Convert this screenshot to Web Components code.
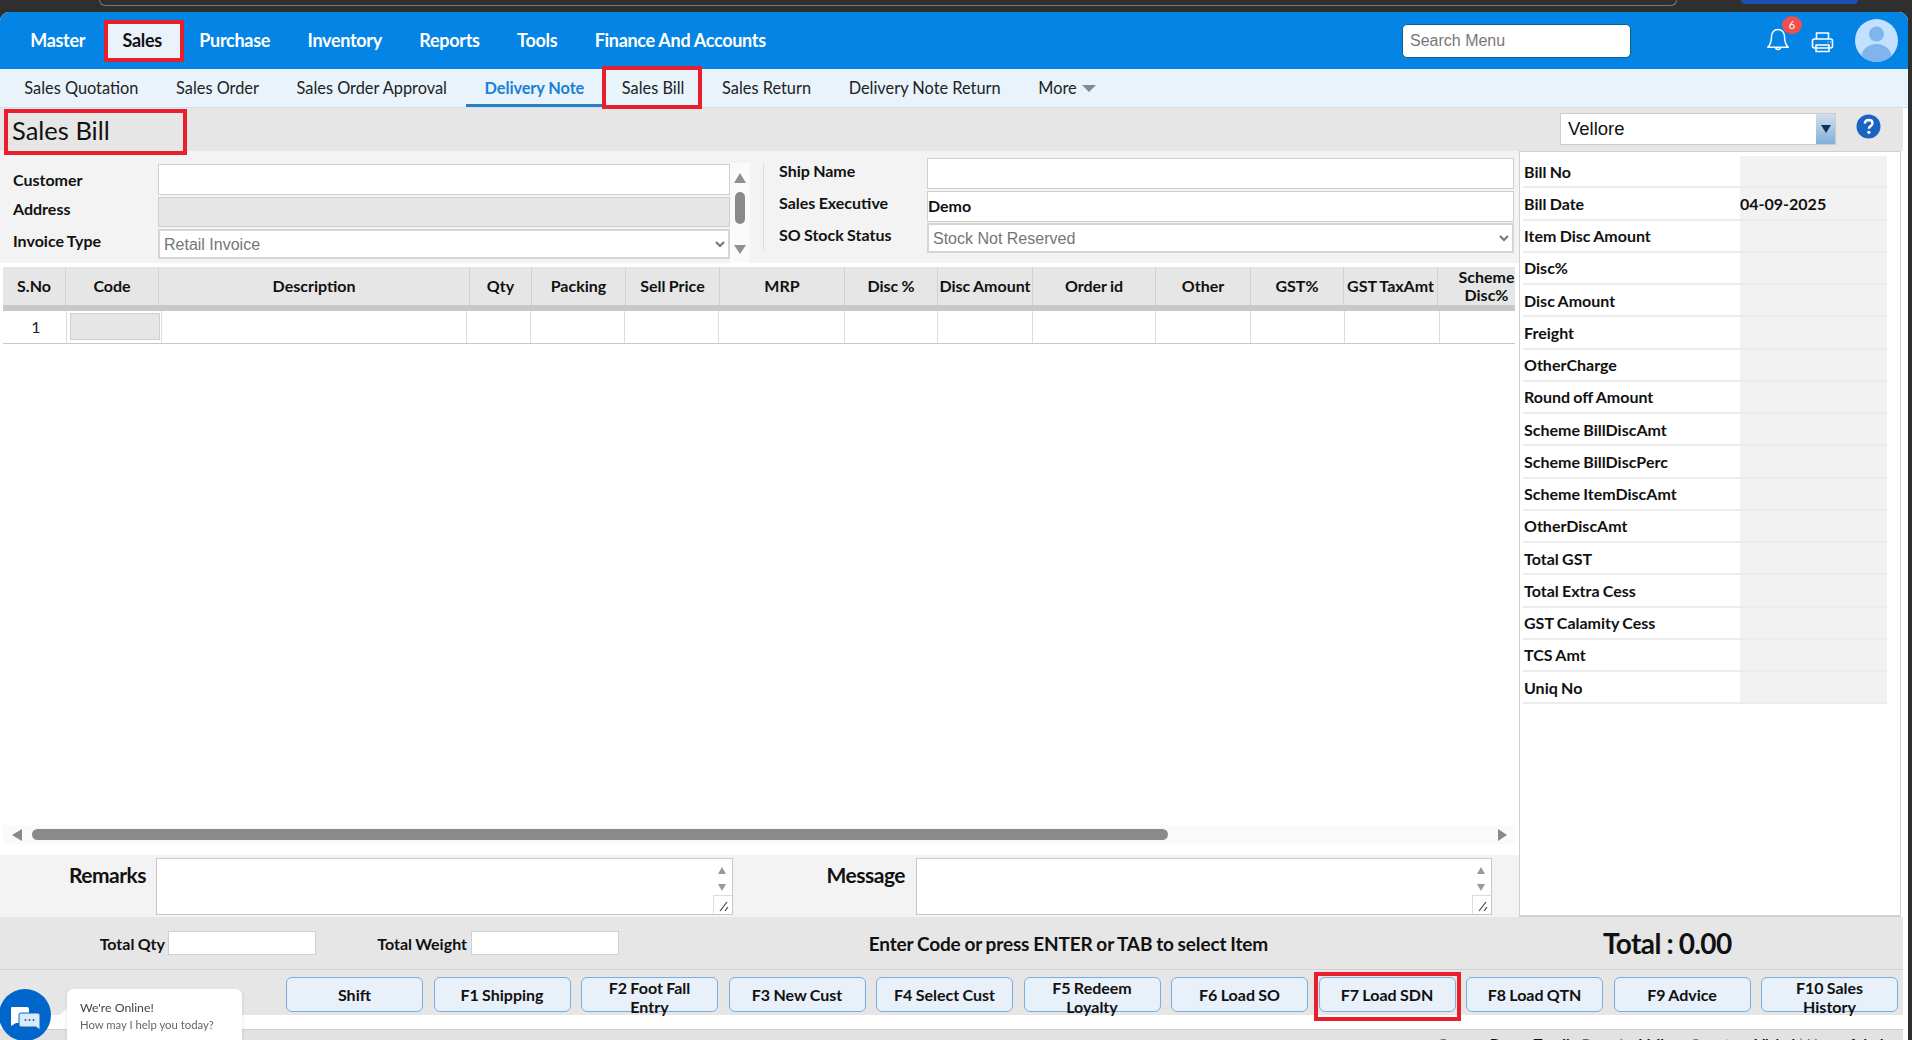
<!doctype html>
<html>
<head>
<meta charset="utf-8">
<title>Sales Bill</title>
<style>
  html, body { margin: 0; height: 1040px; overflow: hidden; background: #2f2f2f; }
  body { font-family: Lato, "Liberation Sans", sans-serif; color: #111; }
</style>
</head>
<body>
<erp-shell>
  <browser-strip slot="strip"></browser-strip>
  <main-nav slot="nav">
    <nav-item>Master</nav-item>
    <nav-item marked>Sales</nav-item>
    <nav-item>Purchase</nav-item>
    <nav-item>Inventory</nav-item>
    <nav-item>Reports</nav-item>
    <nav-item>Tools</nav-item>
    <nav-item>Finance And Accounts</nav-item>
  </main-nav>
  <sub-nav slot="nav">
    <tab-item>Sales Quotation</tab-item>
    <tab-item>Sales Order</tab-item>
    <tab-item>Sales Order Approval</tab-item>
    <tab-item active>Delivery Note</tab-item>
    <tab-item marked>Sales Bill</tab-item>
    <tab-item>Sales Return</tab-item>
    <tab-item>Delivery Note Return</tab-item>
    <tab-item more>More</tab-item>
  </sub-nav>
  <title-bar slot="title">Sales Bill</title-bar>
  <party-form slot="left"></party-form>
  <line-grid slot="left"></line-grid>
  <h-rail slot="left"></h-rail>
  <notes-row slot="left"></notes-row>
  <info-panel slot="right"></info-panel>
  <totals-bar slot="foot"></totals-bar>
  <action-bar slot="foot">
    <fn-button>Shift</fn-button>
    <fn-button>F1 Shipping</fn-button>
    <fn-button two>F2 Foot Fall Entry</fn-button>
    <fn-button>F3 New Cust</fn-button>
    <fn-button>F4 Select Cust</fn-button>
    <fn-button two>F5 Redeem Loyalty</fn-button>
    <fn-button>F6 Load SO</fn-button>
    <fn-button marked>F7 Load SDN</fn-button>
    <fn-button>F8 Load QTN</fn-button>
    <fn-button>F9 Advice</fn-button>
    <fn-button two>F10 Sales History</fn-button>
  </action-bar>
  <status-strip slot="foot"></status-strip>
</erp-shell>
<chat-widget></chat-widget>

<script>
const RED = "#e8202e";
const LABEL = "font-family: Lato, sans-serif; font-weight: 700; word-spacing: -0.6px; color: #111;";

// Shared bits: open shadow root, css() + html() rendered on connect
class Base extends HTMLElement {
  constructor() {
    super();
    this.attachShadow({ mode: "open" });
  }
  connectedCallback() {
    this.shadowRoot.innerHTML = `<style>${this.css()}</style>${this.html()}`;
  }
  css() { return ""; }
  html() { return "<slot></slot>"; }
}

class ErpShell extends Base {
  css() {
    return `
      :host { display: block; width: 1912px; height: 1040px; }
      .page { width: 1908px; height: 1028px; background: #fff; border-radius: 9px 9px 0 0; overflow: hidden; }
      .work { width: 1903px; display: grid; grid-template-columns: 1519px 384px; height: 766px; }
      .left { display: flex; flex-direction: column; min-width: 0; }
      .foot { width: 1903px; }
    `;
  }
  html() {
    return `
      <slot name="strip"></slot>
      <div class="page">
        <slot name="nav"></slot>
        <div class="foot"><slot name="title"></slot></div>
        <div class="work">
          <div class="left"><slot name="left"></slot></div>
          <div><slot name="right"></slot></div>
        </div>
        <div class="foot"><slot name="foot"></slot></div>
      </div>
    `;
  }
}

class BrowserStrip extends Base {
  css() {
    return `
      :host { display: flex; height: 12px; align-items: flex-start; }
      .url { width: 1576px; height: 5px; margin-left: 99px; border: 1px solid #777; border-top: 0; border-radius: 0 0 10px 10px; }
      .pill { width: 117px; height: 4px; margin-left: 64px; background: #1d4fb0; border-radius: 0 0 10px 10px; }
    `;
  }
  html() { return `<div class="url"></div><div class="pill"></div>`; }
}

class MainNav extends Base {
  css() {
    return `
      :host { display: flex; height: 57px; background: #0484e4; align-items: center; padding-left: 11.5px; }
      .search {
        width: 220px; height: 32px; margin-left: auto; background: #fff; border: 1px solid #0f5f7a; border-radius: 5px;
        font: 16px "Liberation Sans", sans-serif; color: #777; display: flex; align-items: center; padding-left: 7px;
      }
      .tools { display: flex; align-items: center; width: 277px; height: 57px; }
      .bell { position: relative; margin-left: 135px; width: 24px; height: 26px; margin-top: -2px; }
      .badge {
        position: absolute; left: 16px; top: -11px; width: 20px; height: 18px; border-radius: 50%; background: #f05050;
        color: #fff; font: 11px Lato, sans-serif; display: flex; align-items: center; justify-content: center;
      }
      .printer { margin-left: 21px; width: 23px; height: 22px; margin-top: 2px; }
      .avatar { margin-left: 21px; width: 43px; height: 43px; }
      svg { display: block; }
    `;
  }
  html() {
    return `
      <slot></slot>
      <div class="search"><span>Search Menu</span></div>
      <div class="tools">
        <div class="bell">
          <svg width="24" height="26" viewBox="0 0 24 26" fill="none" stroke="#fff" stroke-width="1.5" stroke-linejoin="round">
            <path d="M12 2.500c-3.900 0-6.500 3-6.500 6.800 0 6.200-1.200 8.600-3.700 11h20.400c-2.500-2.400-3.700-4.800-3.700-11 0-3.800-2.600-6.800-6.500-6.800z"/>
            <path d="M9.400 20.500a2.700 2.700 0 0 0 5.200 0"/>
          </svg>
          <span class="badge">6</span>
        </div>
        <svg class="printer" viewBox="0 0 23 22" fill="none" stroke="#fff" stroke-width="1.6" stroke-linejoin="round">
          <path d="M5.500 8V2h12v6"/>
          <rect x="1.500" y="8" width="20" height="9" rx="2"/>
          <path d="M5 14h13v6.500H5z"/>
          <path d="M16.500 11h1M19 11h.8" stroke-width="1.1"/>
        </svg>
        <svg class="avatar" viewBox="0 0 43 43">
          <defs><clipPath id="av"><circle cx="21.500" cy="21.500" r="21.500"/></clipPath></defs>
          <circle cx="21.500" cy="21.500" r="21.500" fill="#c2e0ff"/>
          <g clip-path="url(#av)" fill="#7fb5ec">
            <circle cx="21.500" cy="15" r="7.500"/>
            <ellipse cx="21.500" cy="38" rx="15" ry="13"/>
          </g>
        </svg>
      </div>
    `;
  }
}

class NavItem extends Base {
  css() {
    return `
      :host {
        display: flex; align-items: center; height: 42px; padding: 0 18.7px 2px; position: relative; box-sizing: border-box;
        font: 700 18px Lato, sans-serif; letter-spacing: -0.3px; color: #fff;
      }
      :host([marked]) { color: #111; background: #eaf3fb; }
      :host([marked])::after { content: ""; position: absolute; inset: 0 -3px 0 0; border: 4px solid ${RED}; }
    `;
  }
}

class SubNav extends Base {
  css() {
    return `
      :host {
        display: flex; height: 38px; background: #e8f3fb; border-bottom: 1px solid #d3dde6; padding-left: 5.5px;
      }
    `;
  }
}

class TabItem extends Base {
  css() {
    return `
      :host {
        display: flex; align-items: center; padding: 0 18.8px 2px; position: relative; height: 38px; box-sizing: border-box;
        font: 400 16.350px Lato, sans-serif; color: #222;
      }
      :host([active]) { color: #1b7fd6; font-weight: 700; border-bottom: 3px solid #2a80c0; padding-bottom: 0; padding-top: 1px; letter-spacing: -0.1px; }
      :host([marked])::after { content: ""; position: absolute; inset: -3px 1px -2px -1px; border: 4px solid ${RED}; }
      .caret { width: 0; height: 0; border: 7px solid transparent; border-top: 7px solid #888; border-bottom: 0; margin-left: 5px; margin-top: 2px; }
      :host(:not([more])) .caret { display: none; }
    `;
  }
  html() { return `<slot></slot><span class="caret"></span>`; }
}

class TitleBar extends Base {
  css() {
    return `
      :host { display: flex; height: 43px; background: #e6e6e6; align-items: flex-start; }
      h1 {
        margin: 1px 0 0 4px; width: 183px; height: 46px; box-sizing: border-box; border: 4px solid ${RED}; position: relative;
        padding-left: 4px; font: 400 25.500px/34px Lato, sans-serif; color: #111;
      }
      .branch {
        margin: 5px 0 0 1373px; width: 276px; height: 32px; box-sizing: border-box; background: #fff; border: 1px solid #ccc;
        display: flex; align-items: center; padding-left: 7px; font: 18.500px "Liberation Sans", sans-serif; color: #111; position: relative;
      }
      .branch i {
        position: absolute; right: 0; top: 0; bottom: 0; width: 19px;
        background: linear-gradient(#cfe0ee, #7fb0d8); display: flex; align-items: center; justify-content: center;
      }
      .branch i::after { content: ""; border: 5px solid transparent; border-top: 8px solid #12325a; border-bottom: 0; }
      svg { margin: 6px 0 0 20px; display: block; }
    `;
  }
  html() {
    return `
      <h1><slot></slot></h1>
      <div class="branch"><span>Vellore</span><i></i></div>
      <svg width="25" height="25" viewBox="0 0 25 25">
        <circle cx="12.500" cy="12.500" r="12" fill="#1a62c4"/>
        <path d="M8.800 9.600c.2-2.300 1.800-3.600 3.900-3.600 2.200 0 3.800 1.300 3.800 3.200 0 2.800-3.600 2.900-3.600 5.600" fill="none" stroke="#fff" stroke-width="2.400"/>
        <circle cx="12.900" cy="18.300" r="1.600" fill="#fff"/>
      </svg>
    `;
  }
}

class VRail extends Base {
  css() {
    return `
      :host { display: flex; flex-direction: column; align-items: center; width: 20px; height: 100px; margin-top: 12px; background: #fafafa; padding-top: 10px; box-sizing: border-box; }
      .up { border: 6px solid transparent; border-bottom: 10px solid #909090; border-top: 0; }
      .down { border: 6px solid transparent; border-top: 9px solid #909090; border-bottom: 0; margin-top: 21px; }
      .thumb { width: 10px; height: 32px; border-radius: 5px; background: #8a8a8a; margin-top: 9px; }
    `;
  }
  html() { return `<div class="up"></div><div class="thumb"></div><div class="down"></div>`; }
}

class PartyForm extends Base {
  css() {
    return `
      :host { display: flex; height: 112px; background: #f3f3f3; }
      .fields { display: grid; align-content: start; }
      .a { grid-template-columns: 145px 572px; grid-template-rows: 31px 30px 30px; row-gap: 2px; padding: 13px 0 0 13px; width: 730px; box-sizing: border-box; }
      .b { grid-template-columns: 148px 587px; grid-template-rows: 31px 31px 30px; row-gap: 1.5px; padding-top: 7px; }
      .rule { width: 1px; height: 88px; margin: 12px 15px 0 13px; background: #dcdcdc; }
      label { ${LABEL} font-size: 16px; align-self: center; }
      .box {
        box-sizing: border-box; border: 1px solid #cfcfcf; background: #fff; min-width: 0; width: 100%; height: 100%; margin: 0; outline: 0;
        font: 700 16px Lato, sans-serif; color: #111; padding: 0 0 2px 0; display: flex; align-items: center;
      }
      .off { background: #e6e6e6; }
      select.box { font: 16px "Liberation Sans", sans-serif; color: #757575; padding: 0; border-width: 2px; border-color: #d5d5d5; border-radius: 0; }
    `;
  }
  html() {
    return `
      <div class="fields a">
        <label style="padding-bottom:1px">Customer</label><div class="box"></div>
        <label style="padding-bottom:8px">Address</label><div class="box off"></div>
        <label style="padding-bottom:8px">Invoice Type</label><select class="box"><option>Retail Invoice</option></select>
      </div>
      <v-rail></v-rail>
      <div class="rule"></div>
      <div class="fields b">
        <label style="padding-bottom:7px">Ship Name</label><div class="box"></div>
        <label style="padding-bottom:7px">Sales Executive</label><div class="box">Demo</div>
        <label style="padding-bottom:8px">SO Stock Status</label><select class="box"><option>Stock Not Reserved</option></select>
      </div>
    `;
  }
}

class LineGrid extends Base {
  css() {
    return `
      :host { display: block; margin: 4px 0 0 3px; width: 1512px; height: 77px; overflow: hidden; }
      .head, .row { display: grid; box-sizing: border-box; }
      .head {
        grid-template-columns: 63px 93px 311px 62px 94px 94px 125px 93px 95px 123px 95px 93px 94px 77px;
        height: 44px; background: #e6e6e6; border-bottom: 6px solid #c8c8c8;
      }
      .head div {
        ${LABEL} font-size: 16px; line-height: 18px; display: flex; align-items: center; justify-content: center; text-align: center;
        border-right: 1px solid #d2d2d2; white-space: nowrap;
      }
      .head div:last-child { border-right: 0; padding-left: 20px; white-space: normal; }
      .row {
        grid-template-columns: 64px 95px 305px 64px 94px 94px 126px 93px 95px 123px 95px 94px 95px 75px;
        height: 33px; background: #fff; border-bottom: 1px solid #c8c8c8;
      }
      .row div { border-right: 1px solid #ddd; font-size: 16px; display: flex; align-items: center; justify-content: center; color: #222; }
      .row div:last-child { border-right: 0; }
      .row .sno { padding: 0 0 2px 3px; }
      .row .code { padding: 2px 1px 3px 3px; }
      .row .code span { display: block; width: 100%; height: 100%; background: #e6e6e6; border: 1px solid #cfcfcf; box-sizing: border-box; }
    `;
  }
  html() {
    const cols = ["S.No", "Code", "Description", "Qty", "Packing", "Sell Price", "MRP", "Disc %", "Disc Amount", "Order id", "Other", "GST%", "GST TaxAmt", "Scheme Disc%"];
    const cells = cols.slice(2).map(() => "<div></div>").join("");
    return `
      <div class="head">${cols.map((c) => `<div>${c}</div>`).join("")}</div>
      <div class="row"><div class="sno">1</div><div class="code"><span></span></div>${cells}</div>
    `;
  }
}

class HRail extends Base {
  css() {
    return `
      :host { display: flex; align-items: center; height: 19px; width: 1513px; margin: auto 0 11px 3px; background: #fafafa; box-sizing: border-box; padding-left: 9px; }
      .l { border: 6px solid transparent; border-right: 10px solid #888; border-left: 0; }
      .r { border: 6px solid transparent; border-left: 9px solid #888; border-right: 0; margin-left: 330px; }
      .thumb { width: 1136px; height: 11px; border-radius: 6px; background: #8a8a8a; margin-left: 10px; }
    `;
  }
  html() { return `<div class="l"></div><div class="thumb"></div><div class="r"></div>`; }
}

class NoteBox extends Base {
  css() {
    return `
      :host { display: block; position: relative; box-sizing: border-box; height: 57px; background: #fff; border: 1px solid #c8c8c8; }
      .side { position: absolute; right: 1px; top: 0; bottom: 0; width: 19px; display: flex; flex-direction: column; align-items: center; padding-top: 8px; box-sizing: border-box; }
      .up { border: 4px solid transparent; border-bottom: 7px solid #999; border-top: 0; }
      .down { border: 4px solid transparent; border-top: 7px solid #999; border-bottom: 0; margin-top: 10px; }
      .grip { position: absolute; right: 0; bottom: 0; width: 19px; height: 19px; box-sizing: border-box; border: 1px solid #ddd; border-width: 1px 0 0 1px; }
    `;
  }
  html() {
    return `
      <div class="side"><div class="up"></div><div class="down"></div></div>
      <div class="grip"><svg width="18" height="18" viewBox="0 0 18 18" fill="none" stroke="#444" stroke-width="1.200"><path d="M6 15 13 6M11 15l3-4"/></svg></div>
    `;
  }
}

class NotesRow extends Base {
  css() {
    return `
      :host { display: grid; grid-template-columns: 146px 587px 172px 587px; height: 62px; background: #f3f3f3; padding-top: 3px; box-sizing: border-box; }
      label { ${LABEL} font-size: 21px; letter-spacing: -0.5px; text-align: right; line-height: 34px; }
      note-box { margin-left: 10px; }
      note-box.m { margin-left: 11px; }
    `;
  }
  html() {
    return `
      <label>Remarks</label><note-box></note-box>
      <label>Message</label><note-box class="m"></note-box>
    `;
  }
}

class InfoPanel extends Base {
  css() {
    return `
      :host { display: block; box-sizing: border-box; width: 382px; height: 766px; background: #fff; border: 1px solid #d0d0d0; border-bottom-width: 2px; padding: 4px 0 0 3px; }
      .row { display: grid; grid-template-columns: 217px 147px; height: 32.250px; box-sizing: border-box; }
      .row span { display: flex; align-items: center; border-bottom: 2px solid #ececec; ${LABEL} font-size: 16px; }
      .row span:first-child { padding-left: 1px; }
      .row span:last-child { background: #f2f2f2; }
    `;
  }
  html() {
    const rows = ["Bill No", "Bill Date", "Item Disc Amount", "Disc%", "Disc Amount", "Freight", "OtherCharge", "Round off Amount", "Scheme BillDiscAmt", "Scheme BillDiscPerc", "Scheme ItemDiscAmt", "OtherDiscAmt", "Total GST", "Total Extra Cess", "GST Calamity Cess", "TCS Amt", "Uniq No"];
    return rows.map((r) => `<div class="row"><span>${r}</span><span>${r === "Bill Date" ? "04-09-2025" : ""}</span></div>`).join("");
  }
}

class TotalsBar extends Base {
  css() {
    return `
      :host { display: flex; align-items: center; height: 53px; box-sizing: border-box; background: #e6e6e6; border-bottom: 1px solid #d2d2d2; ${LABEL} font-size: 16px; }
      span { text-align: right; white-space: nowrap; }
      .q { width: 165px; }
      .w { width: 151px; }
      .box { width: 148px; height: 24px; box-sizing: border-box; background: #fff; border: 1px solid #d0d0d0; }
      .msg { width: 649px; font-size: 19px; letter-spacing: -0.15px; word-spacing: -0.6px; }
      .total { margin-left: 335px; font: 700 28px Lato, sans-serif; letter-spacing: -0.6px; }
    `;
  }
  html() {
    return `
      <span class="q">Total Qty</span><div class="box" style="margin-left:3px"></div>
      <span class="w">Total Weight</span><div class="box" style="margin-left:4px"></div>
      <span class="msg">Enter Code or press ENTER or TAB to select Item</span>
      <span class="total">Total : 0.00</span>
    `;
  }
}

class ActionBar extends Base {
  css() {
    return `
      :host { display: flex; height: 45px; box-sizing: border-box; background: #e6e6e6; padding: 7px 0 0 286px; gap: 10.500px; }
    `;
  }
}

class FnButton extends Base {
  css() {
    return `
      :host {
        display: flex; align-items: center; justify-content: center; text-align: center; position: relative;
        width: 137px; height: 35px; box-sizing: border-box; padding: 0 12px; background: #e8f0f9; border: 1px solid #7aaee0; border-radius: 6px;
        ${LABEL} font-size: 16px; line-height: 19.500px; flex: none;
      }
      :host([two]) { padding-top: 5px; }
      :host([marked])::after { content: ""; position: absolute; inset: -6px -6px -10px -6px; border: 4px solid ${RED}; }
    `;
  }
}

class StatusStrip extends Base {
  css() {
    return `
      :host { display: block; margin-top: 14px; height: 11px; box-sizing: border-box; background: #e2e2e2; border-top: 1px solid #cfcfcf; overflow: hidden; font: 15px/15px Lato, sans-serif; color: #666; padding: 7px 0 0 1437px; white-space: nowrap; }
      b { color: #111; }
    `;
  }
  html() { return `Group : <b>Demo Textile</b> Branch : <b>Vellore</b> Counter : <b>Vishal</b> | User : <b>Admin</b>`; }
}

class ChatWidget extends Base {
  css() {
    return `
      :host { position: fixed; left: 0; top: 989px; width: 245px; height: 51px; display: block; overflow: hidden; }
      .fab { position: absolute; left: -1px; top: 0; width: 52px; height: 52px; border-radius: 50%; background: #0066cc; }
      .bubble {
        position: absolute; left: 67px; top: 0; width: 175px; height: 60px; background: #fff; border-radius: 6px; box-sizing: border-box; padding: 10px 0 0 13px;
        font: 11.300px/17px Lato, sans-serif; color: #666; box-shadow: 0 0 4px rgba(0,0,0,.12);
      }
      .bubble b { display: block; font-weight: 400; font-size: 12.300px; color: #444; }
      .tail { position: absolute; left: 62px; top: 21px; width: 10px; height: 10px; background: #fff; transform: rotate(45deg); }
    `;
  }
  html() {
    return `
      <div class="fab">
        <svg width="52" height="52" viewBox="0 0 52 52">
          <path d="M13 18h15a2 2 0 0 1 2 2v12a2 2 0 0 1-2 2H17l-5 3V19a1 1 0 0 1 1-1z" fill="#fff"/>
          <path d="M22 24h17a2 2 0 0 1 2 2v15l-4-3H22a2 2 0 0 1-2-2V26a2 2 0 0 1 2-2z" fill="#dce9f6" stroke="#0066cc"/>
          <circle cx="26.500" cy="31" r="1" fill="#0066cc"/><circle cx="30.500" cy="31" r="1" fill="#0066cc"/><circle cx="34.500" cy="31" r="1" fill="#0066cc"/>
        </svg>
      </div>
      <div class="tail"></div>
      <div class="bubble"><b>We're Online!</b>How may I help you today?</div>
    `;
  }
}

customElements.define("erp-shell", ErpShell);
customElements.define("browser-strip", BrowserStrip);
customElements.define("main-nav", MainNav);
customElements.define("nav-item", NavItem);
customElements.define("sub-nav", SubNav);
customElements.define("tab-item", TabItem);
customElements.define("title-bar", TitleBar);
customElements.define("v-rail", VRail);
customElements.define("party-form", PartyForm);
customElements.define("line-grid", LineGrid);
customElements.define("h-rail", HRail);
customElements.define("note-box", NoteBox);
customElements.define("notes-row", NotesRow);
customElements.define("info-panel", InfoPanel);
customElements.define("totals-bar", TotalsBar);
customElements.define("action-bar", ActionBar);
customElements.define("fn-button", FnButton);
customElements.define("status-strip", StatusStrip);
customElements.define("chat-widget", ChatWidget);
</script>
</body>
</html>
